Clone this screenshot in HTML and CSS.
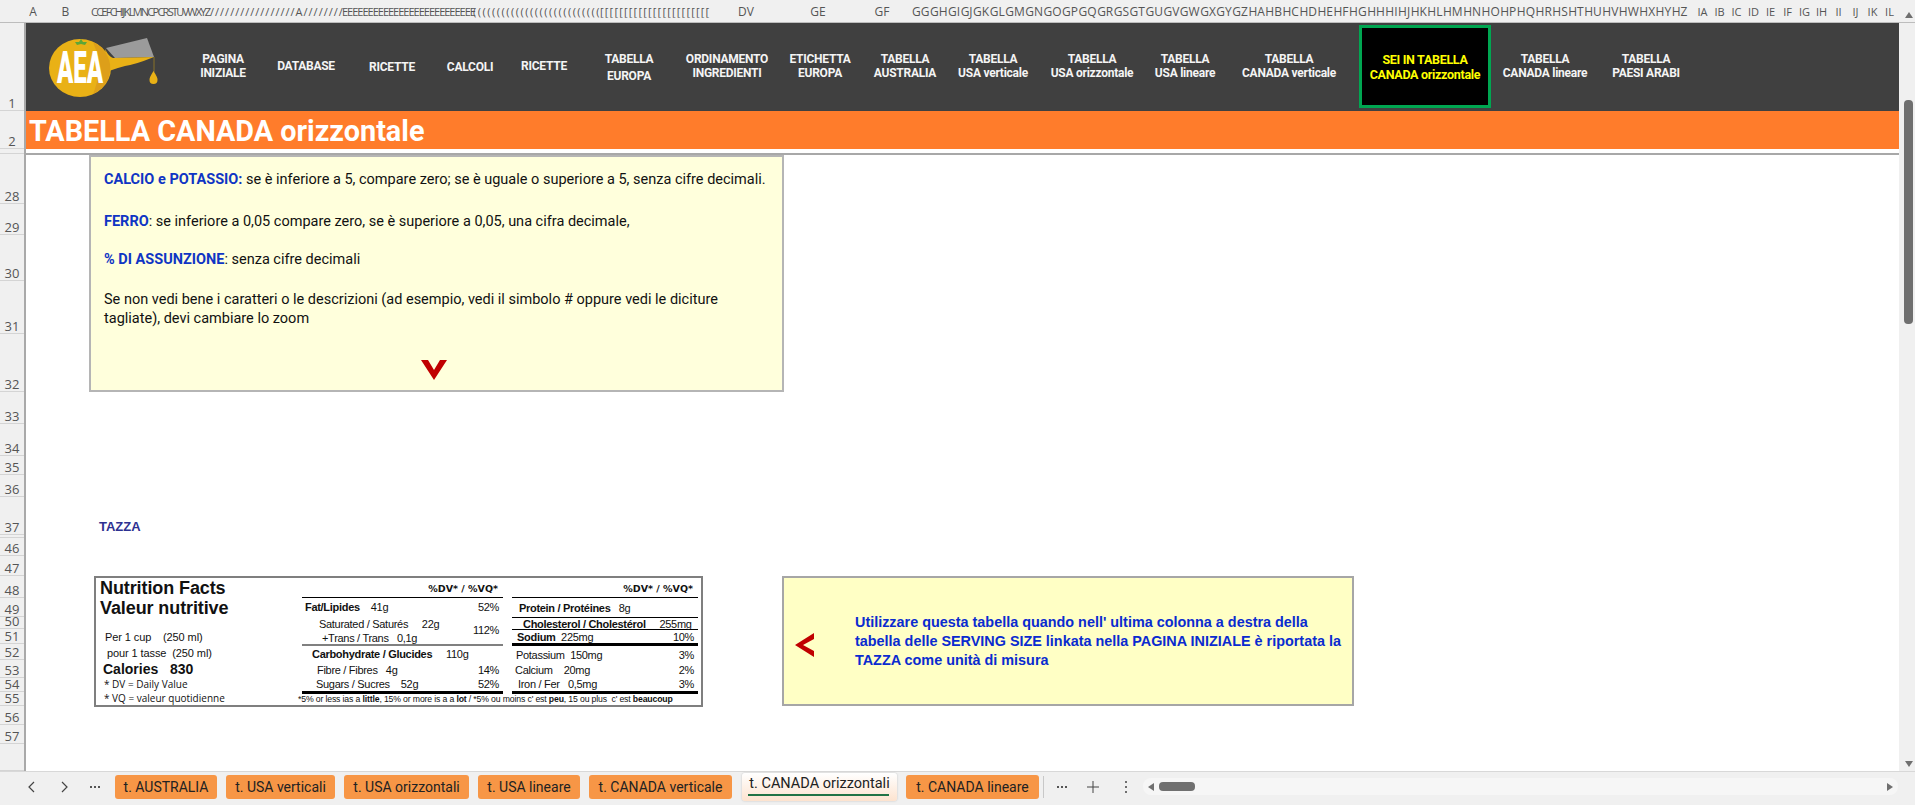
FILE: index.html
```html
<!DOCTYPE html>
<html lang="it">

<head>
    <meta charset="UTF-8">
    <title>TABELLA CANADA orizzontale</title>
    <link rel="stylesheet" href="styles.css">
</head>

<body>
    <div class="app">
        <!-- intestazione colonne -->
        <div class="col-head">
            <div class="corner"></div>
            <span class="col col-a">A</span>
            <span class="col col-b">B</span>
            <span class="col col-run run-1">CCEFCHIJKLMNCPCRSTUVWXYZ</span>
            <span class="col col-run run-2">/////////////////A////////</span>
            <span class="col col-run run-3">EEEEEEEEEEEEEEEEEEEEEEEEEE</span>
            <span class="col col-run run-4">(((((((((((((((((((((((((((</span>
            <span class="col col-run run-5">[[[[[[[[[[[[[[[[[[[[[[[</span>
            <span class="col col-dv">DV</span>
            <span class="col col-ge">GE</span>
            <span class="col col-gf">GF</span>
            <span class="col col-tail">GG GH GI GJ GK GL GM GN GO GP GQ GR GS GT GU GV GW GX GY GZ HA HB HC HD HE HF HG HH HI HJ HK HL HM HN HO HP HQ HR HS HT HU HV HW HX HY HZ</span>
            <span class="col col-last">IA</span>
            <span class="col col-last">IB</span>
            <span class="col col-last">IC</span>
            <span class="col col-last">ID</span>
            <span class="col col-last">IE</span>
            <span class="col col-last">IF</span>
            <span class="col col-last">IG</span>
            <span class="col col-last">IH</span>
            <span class="col col-last">II</span>
            <span class="col col-last">IJ</span>
            <span class="col col-last">IK</span>
            <span class="col col-last">IL</span>
        </div>

        <div class="middle">
            <!-- numeri di riga -->
            <div class="row-head">
                <span>1</span><span>2</span><span></span>
                <span>28</span><span>29</span><span>30</span><span>31</span><span>32</span><span>33</span>
                <span>34</span><span>35</span><span>36</span><span>37</span><span></span><span>46</span>
                <span>47</span><span>48</span><span>49</span><span>50</span><span>51</span><span>52</span>
                <span>53</span><span>54</span><span>55</span><span>56</span><span>57</span><span></span>
            </div>

            <div class="sheet">
                <div class="nav">
                    <div class="logo">
                        <svg width="112" height="60" viewBox="0 0 112 60">
                            <path d="M57 10 L98 0 L105 19 L66 20 Z" fill="#9b9b9b"/>
                            <path d="M56 11 Q60 19 64 20 L105 19 Q85 27 76 28 Q68 30 60 33 Z" fill="#e9b116"/>
                            <ellipse cx="31" cy="30" rx="31" ry="29" fill="#e9b116"/>
                            <path d="M44 4 A31 29 0 0 1 44 56 Q55 30 44 4 Z" fill="#dd9f1a"/>
                            <path d="M32 1 L34 4 L38 4 L36 7 L32 6 L28 7 L26 4 L30 4 Z" fill="#5da638"/>
                            <text class="logo-text" x="31" y="45" text-anchor="middle" textLength="46" lengthAdjust="spacingAndGlyphs">AEA</text>
                            <path d="M105 19 V34" stroke="#7d6a2c" stroke-width="1.2"/>
                            <path d="M104.500 33 Q109 40 108.500 42 A4 4 0 0 1 100.500 42 Q100 40 104.500 33 Z" fill="#e9b116"/>
                        </svg>
                    </div>
                    <div class="nav-item">PAGINA<br>INIZIALE</div>
                    <div class="nav-item">DATABASE</div>
                    <div class="nav-item nav-low">RICETTE</div>
                    <div class="nav-item nav-low">CALCOLI</div>
                    <div class="nav-item">RICETTE</div>
                    <div class="nav-item nav-wide">TABELLA<br>EUROPA</div>
                    <div class="nav-item">ORDINAMENTO<br>INGREDIENTI</div>
                    <div class="nav-item">ETICHETTA<br>EUROPA</div>
                    <div class="nav-item">TABELLA<br>AUSTRALIA</div>
                    <div class="nav-item">TABELLA<br>USA verticale</div>
                    <div class="nav-item">TABELLA<br>USA orizzontale</div>
                    <div class="nav-item">TABELLA<br>USA lineare</div>
                    <div class="nav-item">TABELLA<br>CANADA verticale</div>
                    <div class="nav-item nav-current">SEI IN TABELLA<br>CANADA orizzontale</div>
                    <div class="nav-item">TABELLA<br>CANADA lineare</div>
                    <div class="nav-item">TABELLA<br>PAESI ARABI</div>
                </div>

                <div class="title-bar">TABELLA CANADA orizzontale</div>
                <div class="freeze"></div>

                <div class="note-top">
                    <p class="note-p1"><b>CALCIO e POTASSIO:</b> se è inferiore a 5, compare zero; se è uguale o superiore a 5, senza cifre decimali.</p>
                    <p class="note-p2"><b>FERRO</b>: se inferiore a 0,05 compare zero, se è superiore a 0,05, una cifra decimale,</p>
                    <p class="note-p3"><b>% DI ASSUNZIONE</b>: senza cifre decimali</p>
                    <p class="note-p4">Se non vedi bene i caratteri o le descrizioni (ad esempio, vedi il simbolo # oppure vedi le diciture tagliate), devi cambiare lo zoom</p>
                    <svg class="arrow-down" width="26" height="20" viewBox="0 0 26 20">
                        <path d="M0 0 L7 0 L13 10 L19 0 L26 0 L13 20 Z" fill="#c00000"/>
                    </svg>
                </div>

                <div class="tazza">TAZZA</div>

                <div class="lower">
                    <div class="facts">
                        <div class="facts-left">
                            <div class="facts-title">Nutrition Facts<br>Valeur nutritive</div>
                            <div class="per per-1">Per 1 cup    (250 ml)</div>
                            <div class="per per-2">pour 1 tasse  (250 ml)</div>
                            <div class="calories">Calories   830</div>
                            <div class="small">* DV = Daily Value</div>
                            <div class="small">* VQ = valeur quotidienne</div>
                        </div>
                        <div class="facts-table">
                            <div class="dv-head">%DV* / %VQ*</div>
                            <div class="line-thin"></div>
                            <div class="r r-h18"><span class="in-1"><b>Fat/Lipides</b>    41g</span><span>52%</span></div>
                            <div class="split">
                                <div>
                                    <div class="r r-h15"><span class="in-2">Saturated / Saturés     22g</span></div>
                                    <div class="r r-h13"><span class="in-3">+Trans / Trans   0,1g</span></div>
                                </div>
                                <span>112%</span>
                            </div>
                            <div class="line-gray"></div>
                            <div class="r r-h16"><span class="in-4"><b>Carbohydrate / Glucides</b>     110g</span></div>
                            <div class="r r-h15"><span class="in-5">Fibre / Fibres   4g</span><span>14%</span></div>
                            <div class="r r-h14"><span class="in-6">Sugars / Sucres    52g</span><span>52%</span></div>
                            <div class="line-thick"></div>
                        </div>
                        <div class="facts-table tbl-2">
                            <div class="dv-head">%DV* / %VQ*</div>
                            <div class="line-thin"></div>
                            <div class="r r-h19"><span class="in-7"><b>Protein / Protéines</b>   8g</span></div>
                            <div class="line-thin"></div>
                            <div class="r r-h11"><span class="in-8"><b>Cholesterol / Cholestérol</b>     255mg</span></div>
                            <div class="line-thin"></div>
                            <div class="r r-h13"><span class="in-9"><b>Sodium</b>  225mg</span><span>10%</span></div>
                            <div class="line-thick"></div>
                            <div class="r r-h17"><span class="in-10">Potassium  150mg</span><span>3%</span></div>
                            <div class="r r-h14"><span class="in-11">Calcium    20mg</span><span>2%</span></div>
                            <div class="r r-h14"><span class="in-12">Iron / Fer   0,5mg</span><span>3%</span></div>
                            <div class="line-thick"></div>
                        </div>
                        <div class="footnote">*5% or less ias a <b>little</b>, 15% or more is a a <b>lot</b> / *5% ou moins c' est <b>peu</b>, 15 ou plus  c' est <b>beaucoup</b></div>
                    </div>

                    <div class="note-side">
                        <svg class="arrow-left" width="19" height="24" viewBox="0 0 19 24">
                            <path d="M19 0 L19 6 L8 12 L19 18 L19 24 L0 12 Z" fill="#c00000"/>
                        </svg>
                        <p>Utilizzare questa tabella quando nell' ultima colonna a destra della tabella delle SERVING SIZE linkata nella PAGINA INIZIALE è riportata la TAZZA come unità di misura</p>
                    </div>
                </div>
            </div>

            <!-- barra verticale -->
            <div class="vscroll">
                <div class="arrow-up"></div>
                <div class="v-thumb"></div>
                <div class="arrow-dn"></div>
            </div>
        </div>

        <!-- fogli in basso -->
        <div class="tabs">
            <svg class="tab-ctl ctl-first" width="10" height="14" viewBox="0 0 10 14"><path d="M7 2 L2 7 L7 12" fill="none" stroke="#444" stroke-width="1.2"/></svg>
            <svg class="tab-ctl" width="10" height="14" viewBox="0 0 10 14"><path d="M3 2 L8 7 L3 12" fill="none" stroke="#444" stroke-width="1.2"/></svg>
            <svg class="dots" width="14" height="4" viewBox="0 0 14 4"><path d="M2 1 H4 V3 H2 Z M6 1 H8 V3 H6 Z M10 1 H12 V3 H10 Z" fill="#555"/></svg>
            <div class="tab tab-1">t. AUSTRALIA</div>
            <div class="tab tab-2">t. USA verticali</div>
            <div class="tab tab-3">t. USA orizzontali</div>
            <div class="tab tab-4">t. USA lineare</div>
            <div class="tab tab-5">t. CANADA verticale</div>
            <div class="tab tab-active">t. CANADA orizzontali</div>
            <div class="tab tab-7">t. CANADA lineare</div>
            <span class="tab-sep"></span>
            <svg class="dots dots-2" width="14" height="4" viewBox="0 0 14 4"><path d="M2 1 H4 V3 H2 Z M6 1 H8 V3 H6 Z M10 1 H12 V3 H10 Z" fill="#555"/></svg>
            <svg class="plus" width="14" height="14" viewBox="0 0 14 14"><path d="M7 1 V13 M1 7 H13" stroke="#444" stroke-width="1"/></svg>
            <svg class="vdots" width="4" height="14" viewBox="0 0 4 14"><circle cx="2" cy="2" r="1" fill="#444"/><circle cx="2" cy="7" r="1" fill="#444"/><circle cx="2" cy="12" r="1" fill="#444"/></svg>
            <div class="hscroll">
                <span class="h-left"></span>
                <span class="h-thumb"></span>
                <span class="h-right"></span>
            </div>
        </div>
    </div>
</body>

</html>
```

FILE: styles.css
```css
* {
    margin: 0;
    padding: 0;
    box-sizing: border-box;
}
html, body {
    width: 1915px;
    height: 805px;
    overflow: hidden;
    background: #f0f0f0;
    font-family: "Liberation Sans", Arial, sans-serif;
}
.app {
    display: flex;
    flex-direction: column;
    width: 1915px;
    height: 805px;
}

/* intestazione colonne */
.col-head {
    display: flex;
    align-items: center;
    height: 23px;
    flex: none;
    background: #f0f0f0;
    border-bottom: 1px solid #bdbdbd;
    font-family: "Open Sans", sans-serif;
    font-size: 12px;
    color: #555;
}
.corner {
    width: 26px;
    flex: none;
}
.col {
    display: block;
    flex: none;
    text-align: center;
    white-space: nowrap;
}
.col-a { width: 14px; }
.col-b { width: 51px; }
.col-run {
    font-size: 11px;
    text-align: left;
}
.run-1 { width: 119px; letter-spacing: -1.75px; }
.run-2 { width: 132px; letter-spacing: 1px; }
.run-3 { width: 131px; letter-spacing: -1px; }
.run-4 { width: 127px; letter-spacing: 1.5px; }
.run-5 { width: 108px; letter-spacing: 1.2px; }
.col-dv { width: 76px; }
.col-ge { width: 68px; }
.col-gf { width: 60px; }
.col-tail {
    width: 782px;
    word-spacing: -2.6px;
    text-align: left;
}
.col-last {
    width: 17px;
    font-size: 11px;
}

.middle {
    display: flex;
    height: 748px;
    flex: none;
}

/* numeri di riga */
.row-head {
    display: grid;
    grid-template-rows: 88px 38px 5px 50px 31px 46px 53px 58px 32px 32px 19px 22px 38px 3px 18px 20px 22px 19px 12px 15px 16px 18px 14px 14px 19px 19px 1fr;
    width: 26px;
    flex: none;
    height: 748px;
    background: #f0f0f0;
    border-right: 2px solid #a9a9a9;
    font-family: "Open Sans", sans-serif;
    font-size: 13px;
    color: #555;
}
.row-head span {
    display: flex;
    align-items: flex-end;
    justify-content: center;
    line-height: 13px;
    overflow: hidden;
    border-bottom: 1px solid #d4d4d4;
}

.sheet {
    display: flex;
    flex-direction: column;
    flex: 1;
    min-width: 0;
    background: #fff;
}

/* barra dei menu */
.nav {
    display: grid;
    grid-template-columns: 158px 78px 88px 84px 72px 76px 94px 102px 84px 86px 90px 108px 78px 130px 137px 108px 94px 1fr;
    align-items: center;
    height: 88px;
    flex: none;
    background: #404040;
    padding-bottom: 4px;
    font-family: Roboto, sans-serif;
    font-size: 12px;
    font-weight: 700;
    line-height: 14px;
    letter-spacing: -0.25px;
    color: #f4f4f4;
    text-align: center;
}
.logo {
    display: flex;
    align-items: center;
    padding-left: 23px;
    padding-top: 4px;
}
.logo-text {
    font-family: Roboto, sans-serif;
    font-weight: 900;
    font-size: 45px;
    letter-spacing: 0;
    fill: #fff;
}
.nav-item {
    white-space: nowrap;
}
.nav-low {
    margin-top: 2px;
}
.nav-wide {
    margin-top: 5px;
    line-height: 17px;
}
.nav-current {
    display: flex;
    align-items: center;
    justify-content: center;
    align-self: start;
    width: 132px;
    height: 83px;
    margin-top: 2px;
    margin-left: 5px;
    background: #000;
    border: 3px solid #00a651;
    color: #ffff00;
    font-size: 12.5px;
    line-height: 15px;
    letter-spacing: -0.3px;
}

.title-bar {
    height: 38px;
    flex: none;
    background: #ff7c2b;
    padding-left: 3px;
    font-family: Roboto, sans-serif;
    font-size: 28.8px;
    font-weight: 700;
    line-height: 40px;
    color: #fff;
}
.freeze {
    height: 6px;
    flex: none;
    border-bottom: 2px solid #a8a8a8;
}

/* riquadro note */
.note-top {
    position: relative;
    width: 695px;
    height: 237px;
    flex: none;
    margin-left: 63px;
    padding: 0 13px;
    background: #ffffdc;
    border: 2px solid #b5b5b5;
    font-family: Roboto, sans-serif;
    font-size: 14.5px;
    line-height: 19px;
    color: #111;
}
.note-top b {
    color: #0f35c4;
}
.note-p1 { margin-top: 13px; }
.note-p2 { margin-top: 23px; }
.note-p3 { margin-top: 19px; }
.note-p4 { margin-top: 21px; }
.arrow-down {
    position: absolute;
    left: 330px;
    top: 203px;
}

.tazza {
    margin-top: 127px;
    margin-left: 73px;
    font-size: 13px;
    font-weight: 700;
    line-height: 16px;
    color: #2e3192;
    flex: none;
}

.lower {
    display: flex;
    align-items: flex-start;
    margin-top: 41px;
    margin-left: 68px;
    flex: none;
}

/* etichetta nutrizionale */
.facts {
    display: grid;
    grid-template-columns: 206px 201px 198px;
    grid-template-rows: 116px 11px;
    width: 609px;
    height: 131px;
    flex: none;
    border: 2px solid #7f7f7f;
    background: #fff;
    color: #111;
    font-size: 11px;
}
.facts-left {
    padding-left: 4px;
    grid-row: 1 / 3;
    white-space: nowrap;
}
.facts-title {
    font-size: 18px;
    font-weight: 700;
    line-height: 20px;
    letter-spacing: -0.1px;
    margin-bottom: 11px;
}
.per {
    line-height: 16px;
    letter-spacing: -0.1px;
    white-space: pre;
}
.per-1 { padding-left: 5px; }
.per-2 { padding-left: 7px; }
.calories {
    font-size: 14px;
    font-weight: 700;
    line-height: 16px;
    padding-left: 3px;
    white-space: pre;
}
.small {
    font-family: "Open Sans", sans-serif;
    font-size: 10px;
    line-height: 14px;
    padding-left: 4px;
}
.facts-table {
    font-size: 11px;
    letter-spacing: -0.3px;
}
.tbl-2 {
    padding-left: 9px;
    padding-right: 3px;
}
.dv-head {
    height: 19px;
    padding-right: 5px;
    padding-top: 4px;
    text-align: right;
    font-family: "DejaVu Sans", sans-serif;
    font-size: 9.500px;
    font-weight: 700;
    line-height: 14px;
    letter-spacing: 0;
}
.line-thin { height: 1px; background: #000; }
.line-gray { height: 2px; background: #808080; }
.line-thick { height: 3px; background: #000; }
.r {
    display: flex;
    align-items: center;
    justify-content: space-between;
    padding-right: 4px;
    white-space: pre;
}
.r-h11 { height: 11px; }
.r-h13 { height: 13px; }
.r-h14 { height: 14px; }
.r-h15 { height: 15px; }
.r-h16 { height: 16px; }
.r-h17 { height: 17px; }
.r-h18 { height: 18px; }
.r-h19 { height: 19px; }
.split {
    display: flex;
    align-items: center;
    justify-content: space-between;
    padding-right: 4px;
}
.in-1 { padding-left: 3px; }
.in-2 { padding-left: 17px; }
.in-3 { padding-left: 20px; }
.in-4 { padding-left: 10px; }
.in-5 { padding-left: 15px; }
.in-6 { padding-left: 14px; }
.in-7 { padding-left: 7px; }
.in-8 { padding-left: 11px; }
.in-9 { padding-left: 5px; }
.in-10 { padding-left: 4px; }
.in-11 { padding-left: 3px; }
.in-12 { padding-left: 6px; }
.footnote {
    grid-column: 2 / 4;
    margin-left: -4px;
    font-size: 8.700px;
    line-height: 11px;
    letter-spacing: -0.15px;
    white-space: pre;
}

/* nota a destra */
.note-side {
    display: flex;
    align-items: center;
    width: 572px;
    height: 130px;
    margin-left: 79px;
    flex: none;
    padding-left: 11px;
    background: #ffffc5;
    border: 2px solid #a6a6a6;
    font-size: 14.4px;
    font-weight: 700;
    line-height: 19px;
    color: #0a2bd0;
}
.arrow-left {
    flex: none;
    margin-right: 41px;
    margin-top: 8px;
}
.note-side p {
    width: 490px;
}

/* barre di scorrimento */
.vscroll {
    position: relative;
    width: 16px;
    flex: none;
    background: #f0f0f0;
}
.v-thumb {
    position: absolute;
    left: 5px;
    top: 77px;
    width: 9px;
    height: 224px;
    background: #6f6f6f;
    border-radius: 4px;
}
.arrow-up, .arrow-dn {
    position: absolute;
    left: 6px;
    width: 0;
    height: 0;
    border-left: 4px solid transparent;
    border-right: 4px solid transparent;
}
.arrow-up {
    top: -11px;
    border-bottom: 6px solid #6f6f6f;
}
.arrow-dn {
    bottom: 4px;
    border-top: 6px solid #6f6f6f;
}

/* fogli */
.tabs {
    display: flex;
    align-items: center;
    height: 34px;
    flex: none;
    padding-bottom: 4px;
    background: #f0f0f0;
    border-top: 1px solid #d8d8d8;
    font-family: Roboto, sans-serif;
    font-size: 14px;
    color: #222;
}
.tab-ctl { flex: none; }
.ctl-first { margin-left: 27px; }
.tab-ctl + .tab-ctl { margin-left: 22px; }
.dots {
    flex: none;
    margin-left: 19px;
    margin-right: 13px;
}
.tab {
    display: flex;
    align-items: center;
    justify-content: center;
    height: 24px;
    flex: none;
    margin-right: 9px;
    background: #f79646;
    border-radius: 3px;
    white-space: nowrap;
}
.tab-1 { width: 102px; }
.tab-2 { width: 109px; }
.tab-3 { width: 125px; }
.tab-4 { width: 102px; }
.tab-5 { width: 143px; margin-right: 10px; }
.tab-active {
    position: relative;
    width: 155px;
    height: 28px;
    padding-bottom: 6px;
    background: linear-gradient(#ffffff, #fde3cf);
    box-shadow: 0 0 2px #bbb;
    font-size: 14.5px;
}
.tab-active::after {
    content: "";
    position: absolute;
    left: 6px;
    right: 8px;
    bottom: 5px;
    height: 2px;
    background: #217346;
}
.tab-7 {
    width: 133px;
    margin-right: 4px;
}
.tab-sep {
    width: 1px;
    height: 22px;
    flex: none;
    background: #c8c8c8;
}
.dots-2 {
    margin-left: 11px;
    margin-right: 0;
}
.plus {
    flex: none;
    margin-left: 17px;
}
.vdots {
    flex: none;
    margin-left: 24px;
}
.hscroll {
    display: flex;
    align-items: center;
    width: 755px;
    height: 17px;
    flex: none;
    margin-left: 15px;
    padding: 0 5px;
    background: #f6f6f6;
    border-radius: 8px;
}
.h-left, .h-right {
    width: 0;
    height: 0;
    flex: none;
    border-top: 4px solid transparent;
    border-bottom: 4px solid transparent;
}
.h-left { border-right: 6px solid #6f6f6f; }
.h-right {
    border-left: 6px solid #6f6f6f;
    margin-left: auto;
}
.h-thumb {
    width: 36px;
    height: 9px;
    flex: none;
    margin-left: 5px;
    background: #707070;
    border-radius: 4px;
}
```
